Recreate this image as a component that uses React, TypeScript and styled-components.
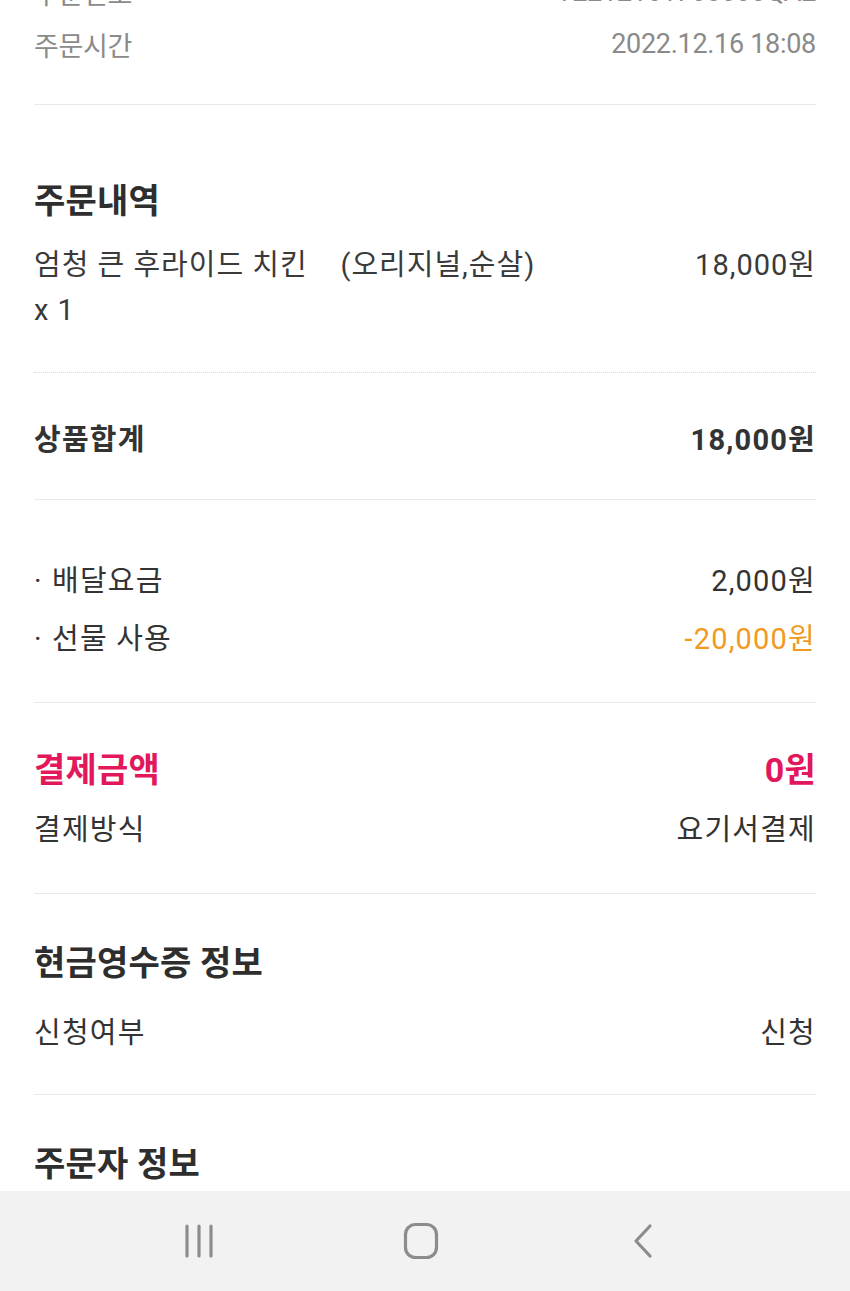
import React from 'react';
import styled, { createGlobalStyle } from 'styled-components';

const GlobalStyle = createGlobalStyle`
  html, body {
    margin: 0;
    padding: 0;
    background: #ffffff;
  }
  body {
    font-family: Roboto, 'Noto Sans CJK KR', sans-serif;
    color: #333333;
  }
`;

type Line = { label: string; value: string; tone?: 'orange' };

const fees: Line[] = [
  { label: '배달요금', value: '2,000원' },
  { label: '선물 사용', value: '-20,000원', tone: 'orange' },
];

const App: React.FC = () => {
  return (
    <Page>
      <GlobalStyle />
      <Content>
        <InfoSection>
          <InfoRow>
            <span>주문번호</span>
            <span>T2212161708000QA2</span>
          </InfoRow>
          <InfoRow>
            <span>주문시간</span>
            <span>2022.12.16 18:08</span>
          </InfoRow>
        </InfoSection>

        <OrderSection>
          <Title>주문내역</Title>
          <ItemRow>
            <ItemName>{'엄청 큰 후라이드 치킨    (오리지널,순살)\nx 1'}</ItemName>
            <span>18,000원</span>
          </ItemRow>
          <DottedLine />
          <Row bold>
            <span>상품합계</span>
            <span>18,000원</span>
          </Row>
        </OrderSection>

        <Section gap={14} top={56} bottom={44}>
          {fees.map((fee) => (
            <Row key={fee.label}>
              <span>
                <Bullet>·</Bullet>
                {fee.label}
              </span>
              <Value tone={fee.tone}>{fee.value}</Value>
            </Row>
          ))}
        </Section>

        <Section gap={16} top={42} bottom={44}>
          <Row bold big tone="pink">
            <span>결제금액</span>
            <span>0원</span>
          </Row>
          <Row>
            <span>결제방식</span>
            <span>요기서결제</span>
          </Row>
        </Section>

        <Section gap={23} top={47} bottom={42}>
          <Title>현금영수증 정보</Title>
          <Row>
            <span>신청여부</span>
            <span>신청</span>
          </Row>
        </Section>

        <Section gap={0} top={47} bottom={0} last>
          <Title>주문자 정보</Title>
        </Section>
      </Content>

      <NavBar>
        <NavButton>
          <svg width="40" height="40" viewBox="0 0 40 40">
            <g stroke="#8c8c8c" strokeWidth="3.2" strokeLinecap="round">
              <line x1="8" y1="5" x2="8" y2="35" />
              <line x1="20" y1="5" x2="20" y2="35" />
              <line x1="32" y1="5" x2="32" y2="35" />
            </g>
          </svg>
        </NavButton>
        <NavButton>
          <svg width="40" height="40" viewBox="0 0 40 40">
            <rect x="4.5" y="3.5" width="31" height="33" rx="10" fill="none" stroke="#8c8c8c" strokeWidth="3.2" />
          </svg>
        </NavButton>
        <NavButton>
          <svg width="40" height="40" viewBox="0 0 40 40">
            <polyline points="27,5 13,20 27,35" fill="none" stroke="#8c8c8c" strokeWidth="3.2" strokeLinecap="round" strokeLinejoin="round" />
          </svg>
        </NavButton>
      </NavBar>
    </Page>
  );
};

export default App;

const Page = styled.div`
  display: flex;
  flex-direction: column;
  width: 850px;
  height: 1291px;
  overflow: hidden;
`;

const Content = styled.div`
  flex: 1;
  overflow: hidden;
  padding: 0 34px;
`;

const InfoSection = styled.div`
  margin-top: -34px;
  padding-bottom: 34px;
  border-bottom: 1px solid #e9e9e9;
`;

const InfoRow = styled.div`
  display: flex;
  justify-content: space-between;
  align-items: center;
  height: 52px;
  font-size: 27px;
  letter-spacing: -0.3px;
  color: #8a8a8a;
`;

const Section = styled.div<{ gap: number; top: number; bottom: number; last?: boolean }>`
  display: flex;
  flex-direction: column;
  gap: ${({ gap }) => gap}px;
  padding: ${({ top }) => top}px 0 ${({ bottom }) => bottom}px;
  border-bottom: ${({ last }) => (last ? 'none' : '1px solid #e9e9e9')};
`;

const OrderSection = styled.div`
  padding: 74px 0 40px;
  border-bottom: 1px solid #e9e9e9;
`;

const Title = styled.div`
  height: 44px;
  line-height: 44px;
  font-size: 34px;
  font-weight: 700;
  letter-spacing: 0.2px;
  color: #2e2e2e;
`;

const ItemRow = styled.div`
  display: flex;
  justify-content: space-between;
  align-items: flex-start;
  margin-top: 20px;
  font-size: 29px;
  line-height: 45px;
  letter-spacing: 1px;
  color: #3a3a3a;
`;

const ItemName = styled.span`
  white-space: pre;
`;

const DottedLine = styled.div`
  margin: 39px 0 42px;
  border-top: 1px dotted #d9d9d9;
`;

const Row = styled.div<{ bold?: boolean; big?: boolean; tone?: 'pink' }>`
  display: flex;
  justify-content: space-between;
  align-items: center;
  height: 44px;
  font-size: ${({ big }) => (big ? 34 : 29)}px;
  font-weight: ${({ bold }) => (bold ? 700 : 400)};
  letter-spacing: ${({ big }) => (big ? 0.2 : 1.2)}px;
  color: ${({ tone }) => (tone === 'pink' ? '#e3175c' : '#333333')};
`;

const Bullet = styled.span`
  display: inline-block;
  width: 18px;
`;

const Value = styled.span<{ tone?: 'orange' }>`
  color: ${({ tone }) => (tone === 'orange' ? '#f19a22' : 'inherit')};
`;

const NavBar = styled.div`
  display: grid;
  grid-template-columns: repeat(3, 222px);
  justify-content: center;
  align-items: center;
  height: 100px;
  padding-right: 8px;
  background: #f2f2f2;
`;

const NavButton = styled.div`
  display: flex;
  justify-content: center;
  align-items: center;
`;
